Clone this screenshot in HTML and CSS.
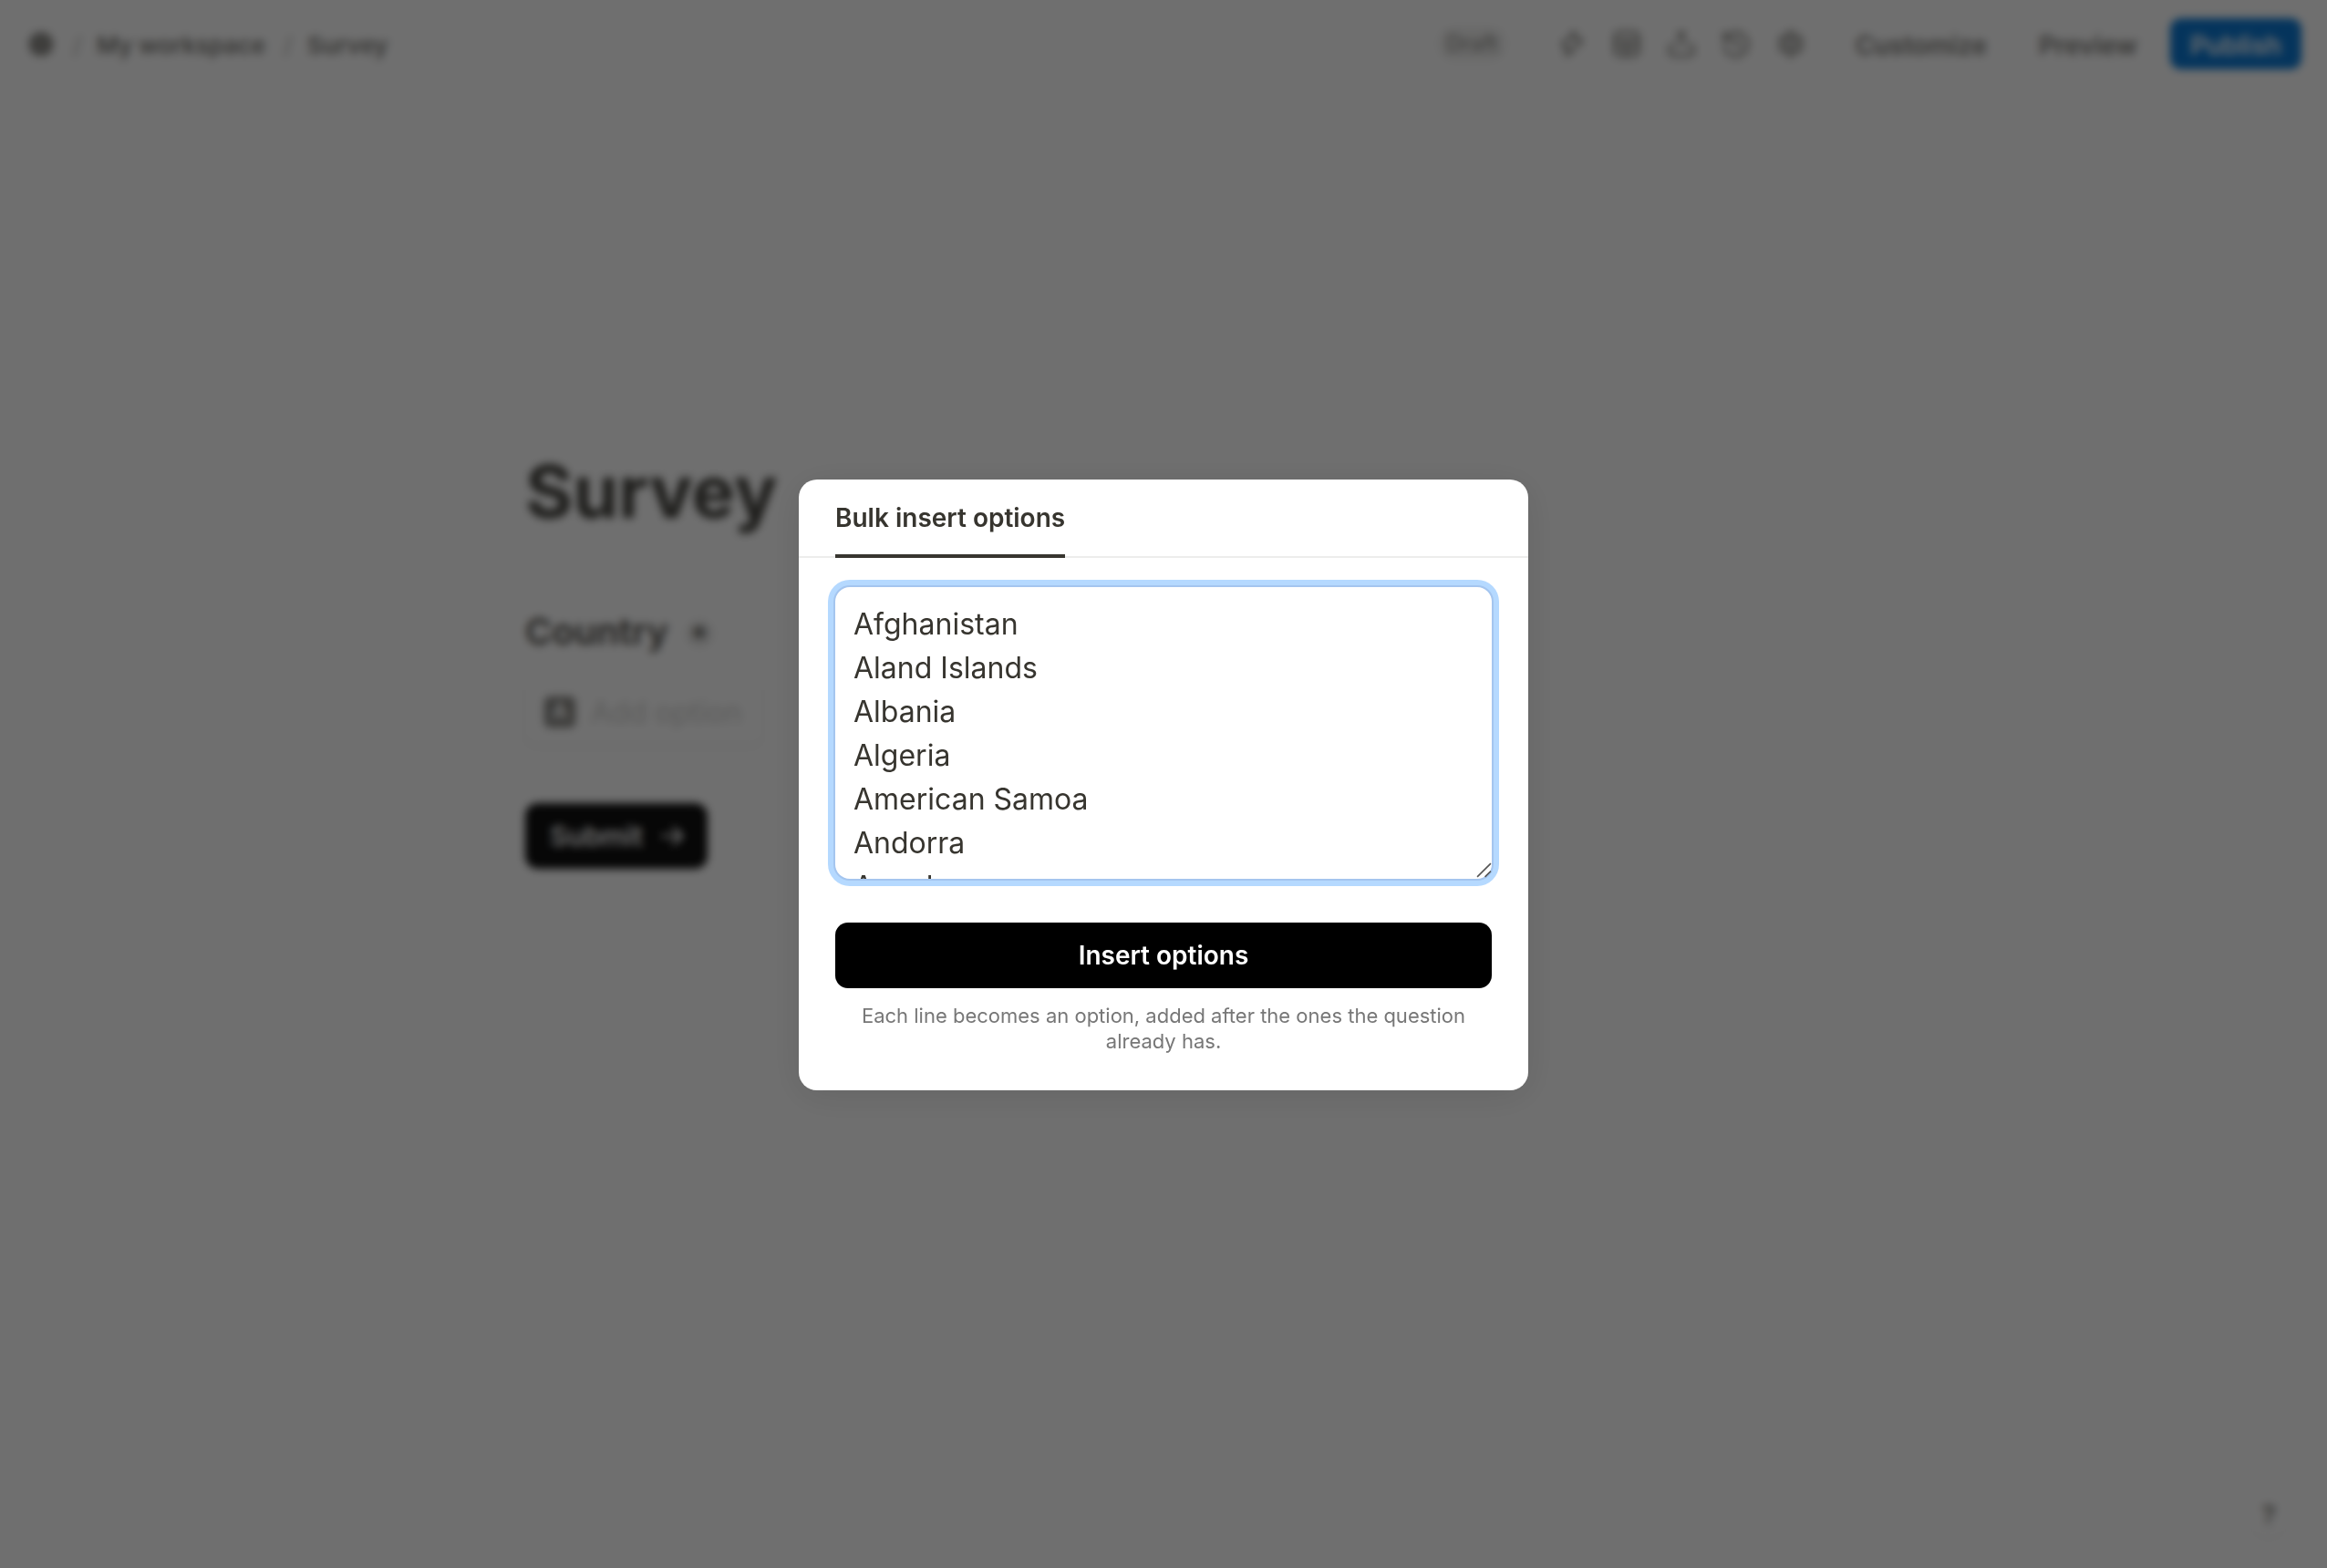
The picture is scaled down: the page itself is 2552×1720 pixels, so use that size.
FILE: index.html
```html
<!DOCTYPE html>
<html lang="en">
<head>
<meta charset="utf-8">
<title>Survey</title>
<link rel="stylesheet" href="styles.css">
</head>
<body>
<div class="page">
  <header class="topbar">
    <nav class="crumbs">
      <svg class="gear" viewBox="0 0 32 32"><path d="M16 1l3.500 2.800 4.400-.6 1.700 4.100 4.100 1.700-.6 4.400L31 16l-1.900 3.600.6 4.400-4.100 1.700-1.700 4.100-4.400-.6L16 31l-3.500-1.800-4.400.6-1.700-4.100L2.300 24l.6-4.400L1 16l1.900-2.600-.6-4.400 4.100-1.700 1.700-4.100 4.400.6z" fill="#8f8e8a"/></svg>
      <span class="slash">/</span>
      <span class="crumb">My workspace</span>
      <span class="slash second">/</span>
      <span class="crumb">Survey</span>
    </nav>
    <div class="actions">
      <span class="draft">Draft</span>
      <div class="tools">
        <svg viewBox="0 0 32 32"><path d="M19 3L6 16q-2 3 2 3h3l-1 10L26 14q2-3-2-3h-5z"/></svg>
        <svg viewBox="0 0 32 32"><rect x="3" y="3" width="26" height="26" rx="5"/><path d="M3 12h26M3 20h26M16 12v17"/></svg>
        <svg viewBox="0 0 32 32"><path d="M16 18V3M12 7l4-4 4 4M9 17H7c-2 0-4 2-4 4v4c0 2 2 4 4 4h18c2 0 4-2 4-4v-4c0-2-2-4-4-4h-2"/></svg>
        <svg viewBox="0 0 32 32"><path d="M3 4v8h8M4 11a13 13 0 1 1-1 8M16 10v7l5 3"/></svg>
        <svg viewBox="0 0 32 32"><circle cx="16" cy="16" r="5"/><path d="M14 3h4l1 4 4 2 3-1 2 5-2 3 2 3-2 5-3-1-4 2-1 4h-4l-1-4-4-2-3 1-2-5 2-3-2-3 2-5 3 1 4-2z"/></svg>
      </div>
      <span class="link customize">Customize</span>
      <span class="link preview">Preview</span>
      <span class="publish">Publish</span>
    </div>
  </header>
  <main class="form">
    <h1 class="title">Survey</h1>
    <div class="question"><span>Country</span><span class="required">*</span></div>
    <div class="option"><span class="key">A</span><span>Add option</span></div>
    <div class="submit"><span>Submit</span>
      <svg viewBox="0 0 28 28"><path d="M3 14h21M15 5l9 9-9 9"/></svg>
    </div>
  </main>
  <span class="help">?</span>
</div>
<div class="overlay">
  <section class="dialog" role="dialog" aria-label="Bulk insert options">
    <header class="tabs"><span class="tab">Bulk insert options</span></header>
    <div class="body">
      <div class="field">
        <textarea class="lines" readonly>Afghanistan
Aland Islands
Albania
Algeria
American Samoa
Andorra
Angola</textarea>
        <svg class="grip" viewBox="0 0 16 16"><path d="M1 15L15 1M9 15l6-6"/></svg>
      </div>
      <button class="insert" type="button">Insert options</button>
      <p class="hint">Each line becomes an option, added after the ones the question already has.</p>
    </div>
  </section>
</div>
</body>
</html>
```
FILE: styles.css
```css
* { box-sizing: border-box; }
body {
  margin: 0;
  height: 1720px;
  overflow: hidden;
  background: #fff;
  color: #37352f;
  font-family: Inter, "Liberation Sans", sans-serif;
}
.page { height: 1720px; position: relative; }
.topbar {
  display: flex;
  justify-content: space-between;
  align-items: center;
  height: 96px;
  padding: 0 28px 0 30px;
  font-size: 28px;
  font-weight: 600;
  color: #7d7c78;
}
.crumbs { display: flex; align-items: center; padding-top: 2px; font-size: 26px; }
.gear { width: 30px; height: 30px; margin: -2px 20px 0 0; }
.slash { width: 12px; margin-right: 14px; color: #b5b4b1; font-weight: 400; }
.slash.second { margin-left: 20px; margin-right: 14px; }
.crumb { color: #7d7c78; }
.actions { display: flex; align-items: center; }
.draft {
  padding: 2px 8px;
  margin-right: 57px;
  border-radius: 16px;
  background: #f1f1f0;
  color: #999894;
  font-size: 24px;
  font-weight: 500;
  line-height: 32px;
}
.tools { display: flex; gap: 28px; margin-right: 55px; }
.tools svg {
  width: 32px;
  height: 32px;
  fill: none;
  stroke: #85847f;
  stroke-width: 3;
  stroke-linejoin: round;
  stroke-linecap: round;
}
.link { padding-top: 4px; }
.customize { margin-right: 57px; }
.preview { margin-right: 36px; }
.publish {
  width: 144px;
  height: 56px;
  border-radius: 12px;
  background: #0c79d4;
  color: #fff;
  line-height: 60px;
  text-align: center;
}
.form { width: 1400px; padding: 391px 0 0 576px; }
.title {
  margin: 0 0 65px;
  color: #464540;
  font-size: 80px;
  line-height: 104px;
  font-weight: 700;
}
.question {
  display: flex;
  align-items: center;
  gap: 20px;
  height: 72px;
  color: #4d4b46;
  font-size: 40px;
  font-weight: 600;
}
.required {
  width: 28px;
  height: 28px;
  border-radius: 50%;
  background: #e4e4e3;
  font-size: 32px;
  line-height: 38px;
  text-align: center;
  margin-top: 6px;
}
.option {
  display: flex;
  align-items: center;
  gap: 17px;
  width: 260px;
  height: 72px;
  margin: 17px 0 64px;
  padding-left: 21px;
  border-radius: 12px;
  box-shadow: 0 2px 4px rgba(0, 0, 0, .06), 0 0 0 2px rgba(0, 0, 0, .02);
  color: #d2d2d0;
  font-size: 32px;
  white-space: nowrap;
}
.key {
  width: 34px;
  height: 34px;
  border-radius: 6px;
  background: #8a8985;
  color: #fff;
  font-size: 24px;
  font-weight: 700;
  line-height: 34px;
  text-align: center;
}
.submit {
  display: flex;
  align-items: center;
  gap: 17px;
  width: 200px;
  height: 72px;
  padding-left: 27px;
  border-radius: 14px;
  background: #101010;
  color: #fff;
  font-size: 30px;
  font-weight: 600;
}
.submit svg { width: 30px; height: 30px; fill: none; stroke: #fff; stroke-width: 3; }
.help {
  position: absolute;
  right: 40px;
  bottom: 34px;
  width: 48px;
  height: 48px;
  border-radius: 50%;
  box-shadow: 0 2px 4px rgba(0, 0, 0, .05);
  color: #77756f;
  font-size: 28px;
  font-weight: 600;
  line-height: 48px;
  text-align: center;
}
.overlay {
  position: absolute;
  inset: 0;
  display: flex;
  justify-content: center;
  align-items: center;
  padding-top: 2px;
  background: rgba(0, 0, 0, .565);
  backdrop-filter: blur(5px);
}
.dialog {
  width: 800px;
  height: 670px;
  border-radius: 20px;
  background: #fff;
  box-shadow: 0 6px 40px rgba(0, 0, 0, .1);
}
.tabs {
  display: flex;
  height: 86px;
  padding: 0 40px;
  border-bottom: 2px solid #ededec;
}
.tab {
  height: 86px;
  border-bottom: 4px solid #37352f;
  font-size: 28px;
  font-weight: 600;
  line-height: 85px;
  white-space: nowrap;
}
.body { padding: 32px 40px 0; }
.field { position: relative; height: 320px; margin-bottom: 48px; }
.lines {
  display: block;
  width: 720px;
  height: 320px;
  padding: 17px 20px 15px;
  border: 0;
  outline: 0;
  border-radius: 16px;
  box-shadow: 0 0 0 2px #a4c5ef, 0 0 0 8px #b5d9ff;
  resize: none;
  overflow: hidden;
  color: #37352f;
  font: 400 32px/48px Inter, "Liberation Sans", sans-serif;
}
.grip {
  position: absolute;
  right: 0;
  bottom: 1px;
  width: 17px;
  height: 17px;
  fill: none;
  stroke: #555;
  stroke-width: 1.500;
}
.insert {
  display: block;
  width: 720px;
  height: 72px;
  padding: 0;
  border: 0;
  border-radius: 14px;
  background: #000;
  color: #fff;
  font: 600 28px/72px Inter, "Liberation Sans", sans-serif;
}
.hint {
  margin: 16px 0 0;
  color: #777;
  font-size: 22px;
  line-height: 28px;
  text-align: center;
}
```
